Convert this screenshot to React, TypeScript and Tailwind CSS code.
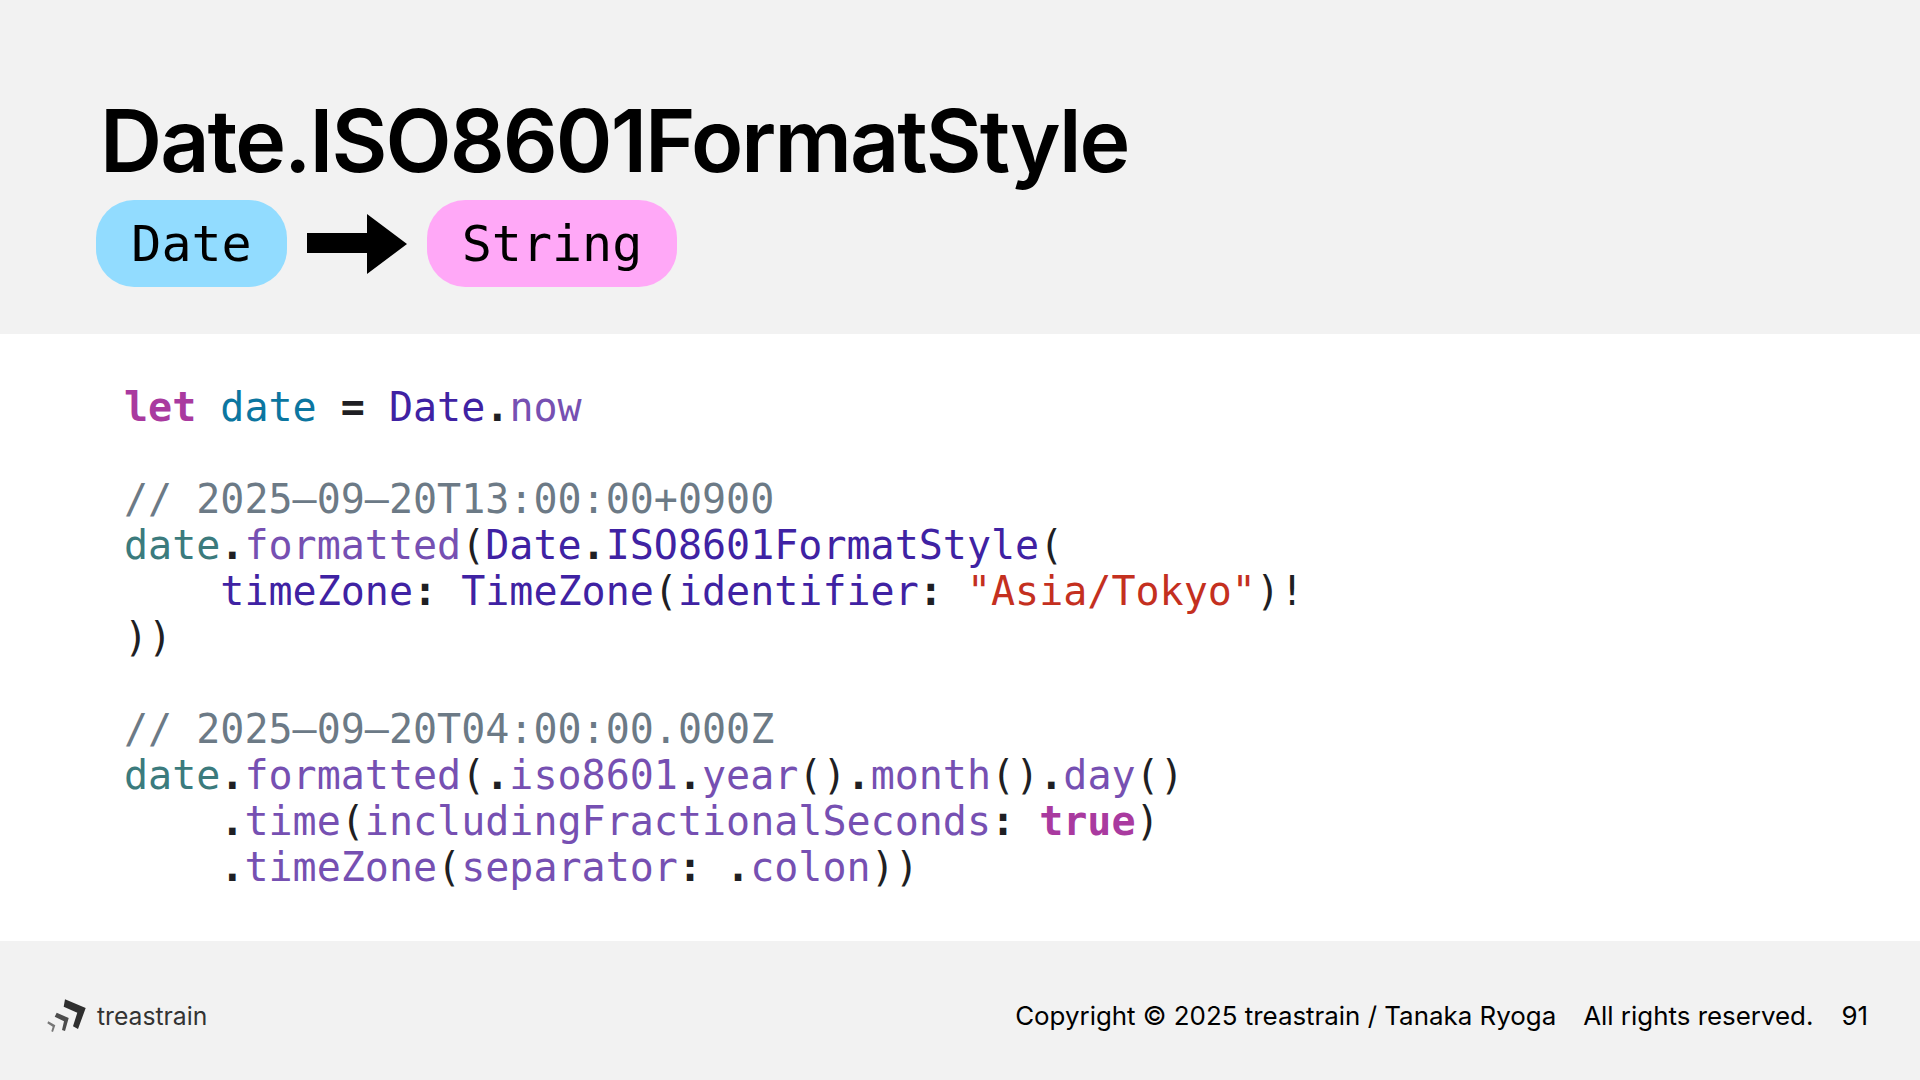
const K = "text-[#a93a9f] font-bold";
const V = "text-[#0b76a0]";
const T = "text-[#3f22a3]";
const M = "text-[#7650b2]";
const C = "text-[#6c7a86]";
const L = "text-[#3b7b7d]";
const S = "text-[#c4301f]";

function P({ c }: { c: string }) {
  return <span className="font-bold">{c}</span>;
}

function Code() {
  return (
    <pre className="pb-0.5 text-[40px] leading-[46px] text-[#1f1f24] font-['DejaVu_Sans_Mono',monospace]">
      <span className={K}>let</span> <span className={V}>date</span> <P c="=" /> <span className={T}>Date</span><P c="." /><span className={M}>now</span>{"\n\n"}
      <span className={C}>// 2025–09–20T13:00:00+0900</span>{"\n"}
      <span className={L}>date</span><P c="." /><span className={M}>formatted</span>(<span className={T}>Date</span><P c="." /><span className={T}>ISO8601FormatStyle</span>({"\n"}
      {"    "}<span className={T}>timeZone</span><P c=":" /> <span className={T}>TimeZone</span>(<span className={T}>identifier</span><P c=":" /> <span className={S}>"Asia/Tokyo"</span>)!{"\n"}
      )){"\n\n"}
      <span className={C}>// 2025–09–20T04:00:00.000Z</span>{"\n"}
      <span className={L}>date</span><P c="." /><span className={M}>formatted</span>(<P c="." /><span className={M}>iso8601</span><P c="." /><span className={M}>year</span>()<P c="." /><span className={M}>month</span>()<P c="." /><span className={M}>day</span>(){"\n"}
      {"    "}<P c="." /><span className={M}>time</span>(<span className={M}>includingFractionalSeconds</span><P c=":" /> <span className={K}>true</span>){"\n"}
      {"    "}<P c="." /><span className={M}>timeZone</span>(<span className={M}>separator</span><P c=":" /> <P c="." /><span className={M}>colon</span>))
    </pre>
  );
}

export default function App() {
  return (
    <div className="w-[1920px] h-[1080px] flex flex-col bg-white overflow-hidden font-['Inter',sans-serif]">
      <header className="h-[334px] bg-[#f2f2f2] pl-24 pt-[93px] flex flex-col">
        <h1 className="pl-1 text-[86px] leading-[96px] font-semibold tracking-[-0.0225em] text-black">Date.ISO8601FormatStyle</h1>
        <div className="mt-[11px] flex items-center">
          <div className="w-[191px] h-[87px] pt-px rounded-[38px] bg-[#92dcff] flex items-center justify-center text-[50px] text-black font-['DejaVu_Sans_Mono',monospace]">Date</div>
          <svg width="100" height="60" viewBox="0 0 100 60" className="block mx-5">
            <path d="M0 19H60V0L100 30L60 60V39H0Z" fill="#000" />
          </svg>
          <div className="w-[250px] h-[87px] pt-px rounded-[38px] bg-[#ffa8f7] flex items-center justify-center text-[50px] text-black font-['DejaVu_Sans_Mono',monospace]">String</div>
        </div>
      </header>
      <main className="h-[607px] pl-[124px] flex items-center">
        <Code />
      </main>
      <footer className="flex-1 bg-[#f2f2f2] flex items-center justify-between pt-[11px] pl-[47px] pr-[52px]">
        <div className="flex items-center gap-2.5 text-[24.7px] text-[#333]">
          <svg width="40" height="34" viewBox="0 0 40 34" className="block">
            <path d="M18 0.3L38.7 9L31 30L26 27.3L30.3 13.7L16.7 7.7Z" fill="#2f2f2f" />
            <path d="M9.7 13.7L21.7 19L18 32L15 31L17 22.3L7.7 17.7Z" fill="#4d4d4d" />
            <path d="M1.3 22.3L8.3 26.3L6 33L4.3 32.3L5.7 27.7L0.3 24.3Z" fill="#777" />
          </svg>
          <span className="pt-0.5">treastrain</span>
        </div>
        <div className="flex items-center text-[25.9px] text-black">
          <span>Copyright © 2025 treastrain / Tanaka Ryoga</span>
          <span className="ml-[27px]">All rights reserved.</span>
          <span className="ml-7">91</span>
        </div>
      </footer>
    </div>
  );
}
